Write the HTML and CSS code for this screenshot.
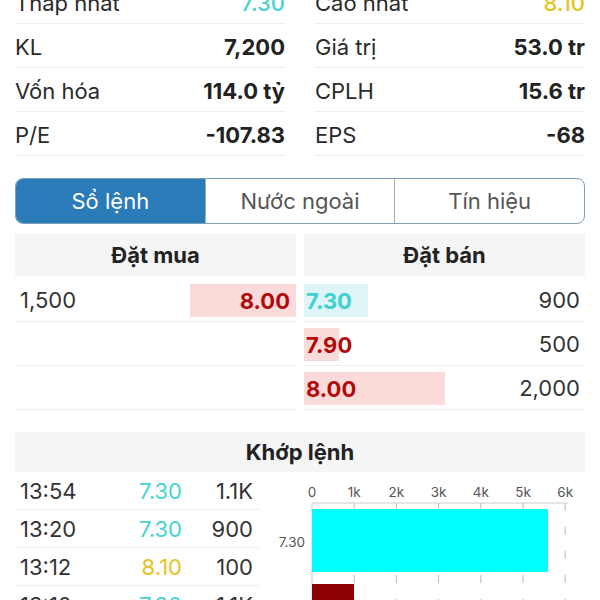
FILE: index.html
```html
<!DOCTYPE html>
<html lang="vi">
<head>
    <meta charset="UTF-8">
    <meta name="viewport" content="width=device-width, initial-scale=1.0">
    <title>Sổ lệnh</title>
    <link rel="stylesheet" href="styles.css">
</head>
<body>
    <div class="page">
        <div class="stats">
            <div class="stat-col">
                <div class="stat"><span>Thấp nhất</span><b class="up">7.30</b></div>
                <div class="stat"><span>KL</span><b>7,200</b></div>
                <div class="stat"><span>Vốn hóa</span><b>114.0 tỷ</b></div>
                <div class="stat"><span>P/E</span><b>-107.83</b></div>
            </div>
            <div class="stat-col">
                <div class="stat"><span>Cao nhất</span><b class="high">8.10</b></div>
                <div class="stat"><span>Giá trị</span><b>53.0 tr</b></div>
                <div class="stat"><span>CPLH</span><b>15.6 tr</b></div>
                <div class="stat"><span>EPS</span><b>-68</b></div>
            </div>
        </div>

        <div class="tabs">
            <div class="tab active">Sổ lệnh</div>
            <div class="tab">Nước ngoài</div>
            <div class="tab">Tín hiệu</div>
        </div>

        <div class="book">
            <div class="side buy">
                <div class="side-head">Đặt mua</div>
                <div class="book-row">
                    <span class="qty">1,500</span>
                    <div class="bar bar-down" style="width:106px">8.00</div>
                </div>
                <div class="book-row"></div>
                <div class="book-row"></div>
            </div>
            <div class="side sell">
                <div class="side-head">Đặt bán</div>
                <div class="book-row">
                    <div class="bar bar-up" style="width:64px">7.30</div>
                    <span class="qty">900</span>
                </div>
                <div class="book-row">
                    <div class="bar bar-down" style="width:35px">7.90</div>
                    <span class="qty">500</span>
                </div>
                <div class="book-row">
                    <div class="bar bar-down" style="width:141px">8.00</div>
                    <span class="qty">2,000</span>
                </div>
            </div>
        </div>

        <div class="match">
            <div class="match-head">Khớp lệnh</div>
            <div class="match-body">
                <div class="trades">
                    <div class="trade"><span class="time">13:54</span><span class="price up">7.30</span><span class="vol">1.1K</span></div>
                    <div class="trade"><span class="time">13:20</span><span class="price up">7.30</span><span class="vol">900</span></div>
                    <div class="trade"><span class="time">13:12</span><span class="price high">8.10</span><span class="vol">100</span></div>
                    <div class="trade"><span class="time">13:10</span><span class="price up">7.30</span><span class="vol">1.1K</span></div>
                </div>
                <svg class="chart" width="325" height="140" viewBox="0 0 325 140">
                    <g class="grid">
                        <line x1="94.2" y1="31" x2="94.2" y2="140"/>
                        <line x1="136.4" y1="31" x2="136.4" y2="140"/>
                        <line x1="178.6" y1="31" x2="178.6" y2="140"/>
                        <line x1="220.8" y1="31" x2="220.8" y2="140"/>
                        <line x1="263" y1="31" x2="263" y2="140"/>
                        <line x1="305.2" y1="31" x2="305.2" y2="140"/>
                    </g>
                    <line x1="52" y1="31" x2="308" y2="31" stroke="#ccc" stroke-width="1"/>
                    <line x1="52" y1="31" x2="52" y2="140" stroke="#ccc" stroke-width="1"/>
                    <g class="ticks">
                        <text x="52" y="25">0</text>
                        <text x="94.2" y="25">1k</text>
                        <text x="136.4" y="25">2k</text>
                        <text x="178.6" y="25">3k</text>
                        <text x="220.8" y="25">4k</text>
                        <text x="263" y="25">5k</text>
                        <text x="305.2" y="25">6k</text>
                    </g>
                    <rect x="52" y="37" width="236" height="63" fill="#00ffff"/>
                    <text class="ylabel" x="45" y="75">7.30</text>
                    <rect x="52" y="112" width="42" height="40" fill="#8b0000"/>
                </svg>
            </div>
        </div>
    </div>
</body>
</html>
```

FILE: styles.css
```css
body {
    margin: 0;
    background: #fff;
    font-family: Inter, "Noto Sans", sans-serif;
    color: #222;
    overflow: hidden;
}
.page {
    padding: 0 15px;
}
.up {
    color: #45d3d3;
}
.high {
    color: #e6c21e;
}

/* stats */
.stats {
    display: grid;
    grid-template-columns: 1fr 1fr;
    column-gap: 30px;
    margin-top: -20px;
}
.stat {
    display: flex;
    justify-content: space-between;
    align-items: center;
    height: 43px;
    padding-top: 2px;
    box-sizing: border-box;
    height: 44px;
    border-bottom: 1px solid #eeeeee;
    font-size: 22px;
}
.stat span {
    color: #2a2a2a;
}
.stat b {
    font-weight: 700;
}
.stat b.up,
.stat b.high {
    font-weight: 500;
}

/* tabs */
.tabs {
    display: flex;
    margin-top: 22px;
    height: 44px;
    border: 1.5px solid #7e9db8;
    border-radius: 8px;
    overflow: hidden;
}
.tab {
    flex: 1;
    display: flex;
    align-items: center;
    justify-content: center;
    font-size: 22px;
    color: #555;
    border-left: 1.5px solid #9bb0c2;
}
.tab:first-child {
    border-left: none;
}
.tab.active {
    background: #2b7bb9;
    color: #fff;
}

/* order book */
.book {
    display: grid;
    grid-template-columns: 1fr 1fr;
    column-gap: 8px;
    margin-top: 10px;
}
.side-head {
    height: 42px;
    display: flex;
    align-items: center;
    justify-content: center;
    background: #f5f5f5;
    font-size: 22px;
    font-weight: 700;
    margin-bottom: 2px;
}
.book-row {
    display: flex;
    justify-content: space-between;
    align-items: flex-start;
    height: 37px;
    padding-top: 6px;
    border-bottom: 1px solid #eeeeee;
    font-size: 22px;
}
.buy .qty {
    padding-left: 5px;
    padding-top: 3px;
    color: #333;
}
.sell .qty {
    padding-right: 5px;
    padding-top: 3px;
    color: #333;
}
.bar {
    height: 33px;
    line-height: 34px;
    font-weight: 700;
    box-sizing: border-box;
}
.buy .bar {
    text-align: right;
    padding-right: 6px;
}
.sell .bar {
    padding-left: 2px;
    white-space: nowrap;
}
.bar-down {
    background: #fbdada;
    color: #b00a0a;
}
.bar-up {
    background: #def5f7;
    color: #3fd0d0;
}

/* matched orders */
.match {
    margin-top: 22px;
}
.match-head {
    height: 40px;
    display: flex;
    align-items: center;
    justify-content: center;
    background: #f5f5f5;
    font-size: 22px;
    font-weight: 700;
}
.match-body {
    display: flex;
}
.trades {
    width: 245px;
}
.trade {
    display: grid;
    grid-template-columns: 1fr 80px 78px;
    align-items: center;
    height: 37px;
    border-bottom: 1px solid #eeeeee;
    font-size: 22px;
    color: #333;
}
.time {
    padding-left: 5px;
}
.price,
.vol {
    text-align: right;
}
.vol {
    padding-right: 7px;
}
.chart {
    display: block;
}
.chart .grid line {
    stroke: #bbb;
    stroke-width: 1;
    stroke-dasharray: 8 16;
}
.chart .ticks text {
    font-family: Inter, sans-serif;
    font-size: 13.5px;
    fill: #555;
    text-anchor: middle;
}
.chart .ylabel {
    font-family: Inter, sans-serif;
    font-size: 13.5px;
    fill: #555;
    text-anchor: end;
}
```
